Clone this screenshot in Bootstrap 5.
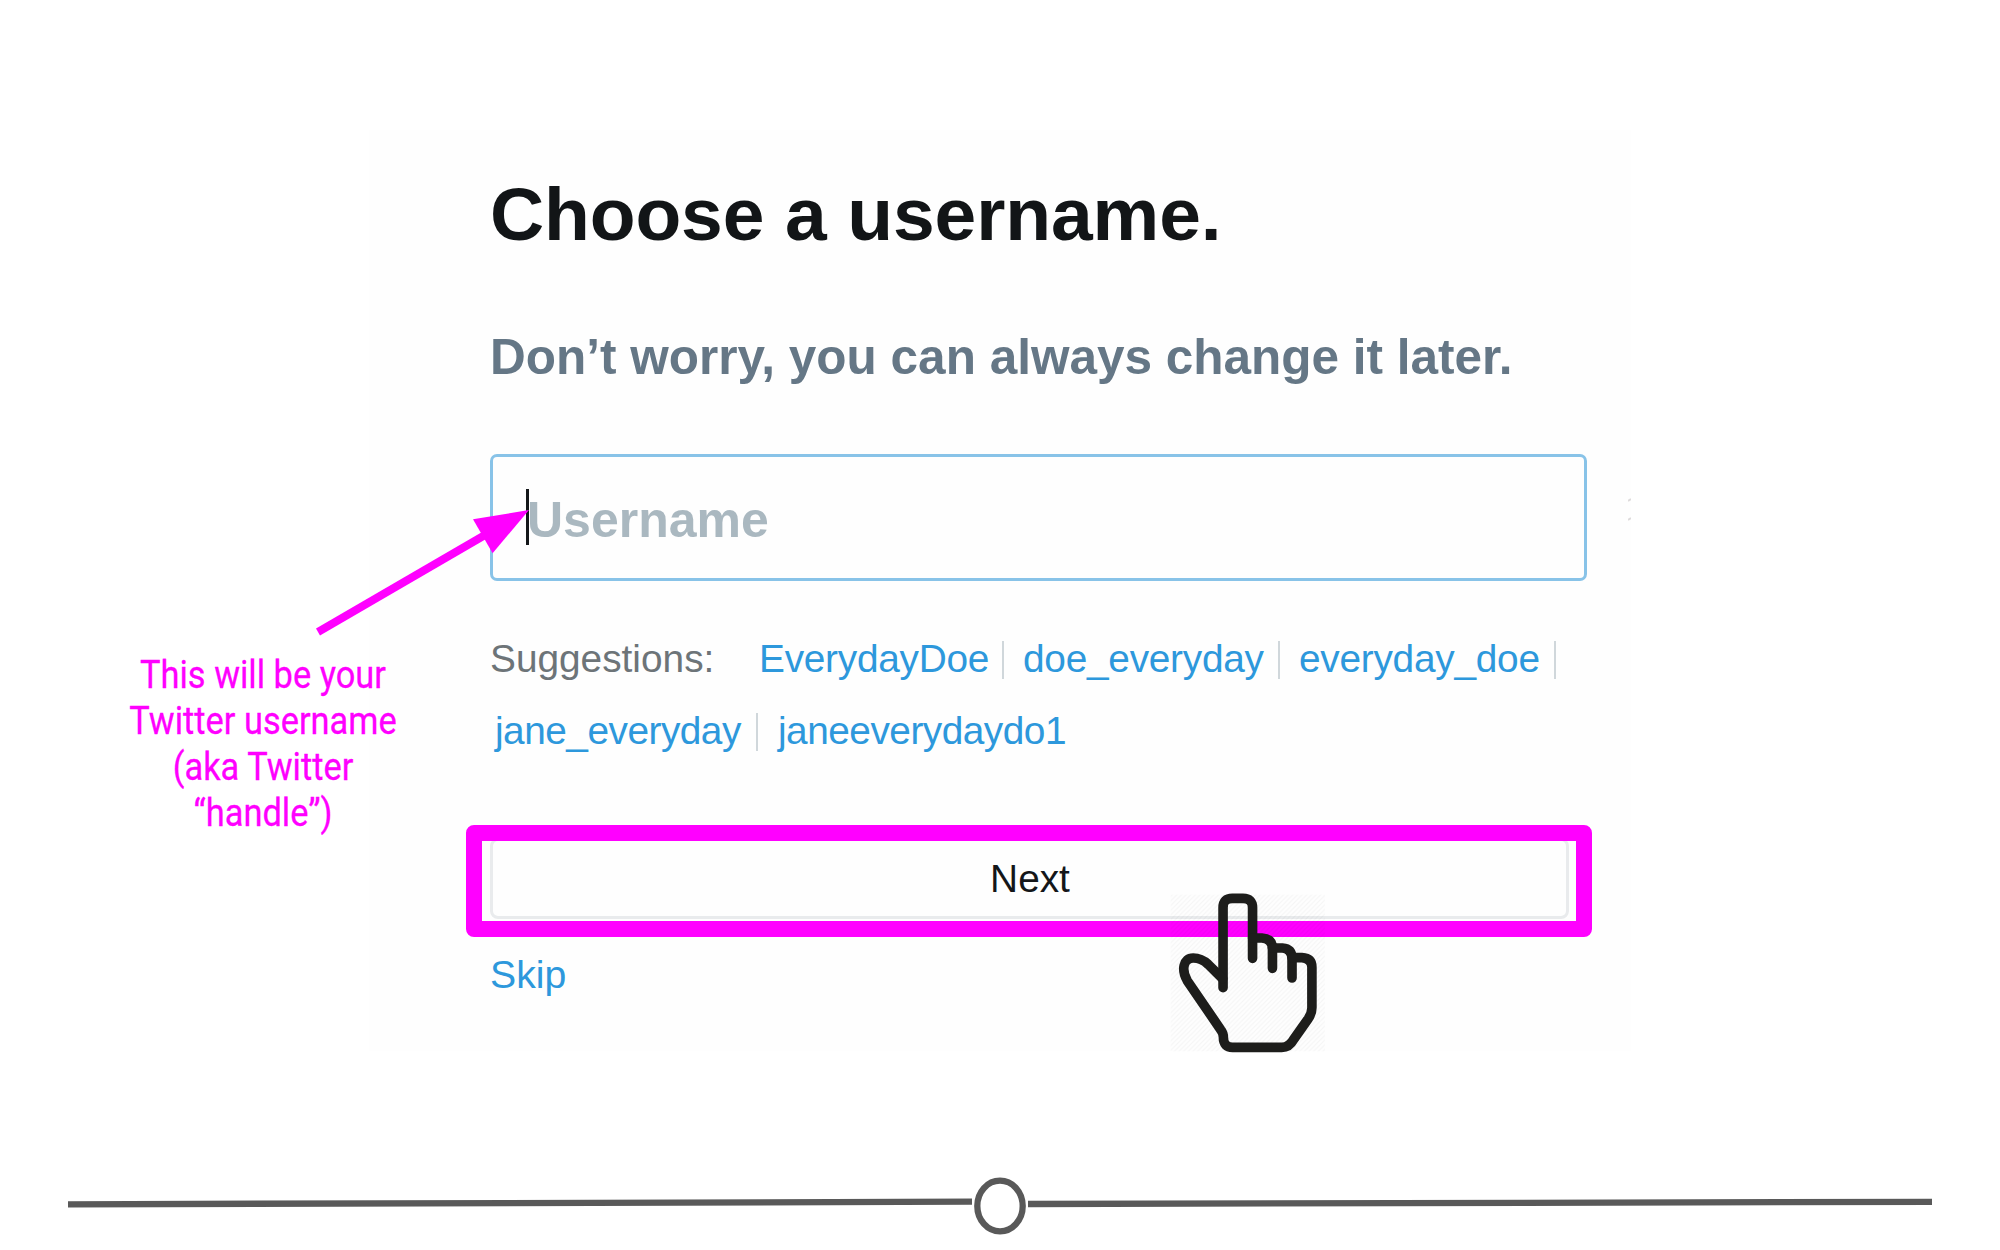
<!DOCTYPE html>
<html lang="en">
<head>
<meta charset="utf-8">
<title>Choose a username</title>
<link href="https://cdn.jsdelivr.net/npm/bootstrap@5.3.0/dist/css/bootstrap.min.css" rel="stylesheet">
<style>
body{background:#fff;font-family:"Liberation Sans",Arial,sans-serif;overflow:hidden}
.slide{width:2000px;height:1250px}
.note-col{width:369px;padding:652px 0 0 83px}
.note-text{width:360px;font:400 38px/46px Roboto,sans-serif;color:#f0f;transform:scaleX(.905);transform-origin:50% 0;white-space:nowrap;-webkit-text-stroke:.3px #f0f}
.panel{width:1262px;height:921px;margin-top:130px;padding:43px 44px 0 121px;background:#fefefe}
.title{font-size:75px;line-height:80px;letter-spacing:-.12px;color:#121517;white-space:nowrap;margin:1px 0 73px 0}
.subtitle{font-size:49.5px;line-height:60px;color:#657786;white-space:nowrap;margin:0 0 67px 0}
.user-field{height:127px;border:3px solid #88c3e8;border-radius:7px;font-size:50px;font-weight:700;padding:4px 0 0 34px;background:#fefefe}
.user-field::placeholder{color:#aab8c0;opacity:1}
.text-cursor{left:36px;top:35px;width:3px;height:56px;background:#14171a}
.suggest{margin-top:42px;font-size:38.8px;line-height:72px;color:#6d7478;white-space:nowrap}
.suggest a,.skip-link{color:#2d98dc;text-decoration:none}
.suggest a{letter-spacing:-.25px}
.suggest .tight{letter-spacing:-.5px}
.divide{width:2px;height:38px;background:#d0d7db;margin-top:2px}
.next-wrap{height:81px;width:1079px;margin-top:71px}
.next-btn{border:3px solid #e9ebed;border-radius:8px;font-size:38.8px;line-height:50px;color:#141619;background:#fefefe;padding:0 0 0 1px}
.ring{left:-24px;top:-13px;width:1126px;height:112px;border:16.5px solid #f0f;border-radius:8px}
.skip-link{font-size:39.2px;line-height:60px;margin-top:26px}
.hand{left:1169px;top:891.7px}
.arrow{left:310px;top:500px}
.rule{left:0;top:1170px}
.speck{left:1628px;top:498px}
</style>
<script src="https://cdn.jsdelivr.net/npm/bootstrap@5.3.0/dist/js/bootstrap.bundle.min.js"></script>
</head>
<body>
<main class="slide position-relative d-flex align-items-start">
  <aside class="note-col flex-shrink-0"><div class="note-text text-center">This will be your<br>Twitter username<br>(aka Twitter<br>“handle”)</div></aside>
  <section class="panel flex-shrink-0 d-flex flex-column">
    <h1 class="title fw-bold">Choose a username.</h1>
    <h2 class="subtitle fw-bold">Don’t worry, you can always change it later.</h2>
    <div class="position-relative">
      <input class="form-control user-field" type="text" placeholder="Username" aria-label="Username">
      <span class="text-cursor position-absolute"></span>
    </div>
    <div class="suggest">
      <div class="d-flex align-items-center">
        <span style="width:269px">Suggestions:</span><a href="#" style="width:243px">EverydayDoe</a><i class="divide"></i>
        <a href="#" style="width:254px;padding-left:19px" >doe_everyday</a><i class="divide" style="margin-left:20px"></i>
        <a href="#" style="width:255px;padding-left:19px">everyday_doe</a><i class="divide" style="margin-left:19px"></i>
      </div>
      <div class="d-flex align-items-center">
        <a class="tight" href="#" style="width:266px;padding-left:5px">jane_everyday</a><i class="divide"></i>
        <a class="tight" href="#" style="padding-left:20px">janeeverydaydo1</a>
      </div>
    </div>
    <div class="next-wrap position-relative">
      <button class="next-btn w-100 h-100" type="button">Next</button>
      <span class="ring position-absolute"></span>
    </div>
    <a class="skip-link" href="#">Skip</a>
  </section>

  <svg class="arrow position-absolute" width="230" height="145" viewBox="310 500 230 145"><path d="M318 632L485 535" stroke="#f0f" stroke-width="8"/><path d="M529 510L473 519.3L492.6 553.3Z" fill="#f0f"/></svg>

  <svg class="hand position-absolute" width="157.5" height="161.7" viewBox="85 275 475 485" preserveAspectRatio="none">
    <defs><pattern id="hatch" width="14" height="14" patternUnits="userSpaceOnUse"><path d="M-2 16L16 -2M-2 2L2 -2M12 16L16 12" stroke="#000" stroke-opacity=".035" stroke-width="3"/></pattern></defs>
    <rect x="90" y="283" width="465" height="470" fill="url(#hatch)"/>
    <g fill="none" stroke="#1d1d1b" stroke-width="29" stroke-linecap="round" stroke-linejoin="round">
      <path d="M248 562V322Q248 294 276 294H308Q337 294 337 322V474"/>
      <path d="M337 413H365Q397 415 397 445V504"/>
      <path d="M397 443H427Q456 445 456 475V533"/>
      <path d="M456 472H486Q516 474 516 501V622C516 637 511 646 505 655L461 717Q448 741 425 741H277Q249 741 249 711Q249 698 241 688L140 541C122 510 127 473 158 473C174 473 188 478 203 492L247 535"/>
    </g>
  </svg>

  <svg class="speck position-absolute" width="3" height="26"><path d="M0 3L3 1M0 22L3 20" stroke="#dedbdc" stroke-width="2"/></svg>

  <svg class="rule position-absolute" width="2000" height="70" viewBox="0 1170 2000 70"><g fill="none" stroke="#595959" stroke-width="6.3"><path d="M68 1204.3L972 1201.7M1028 1204L1932 1201.8"/><ellipse cx="1000" cy="1206" rx="22.7" ry="25.3"/></g></svg>
</main>
</body>
</html>
